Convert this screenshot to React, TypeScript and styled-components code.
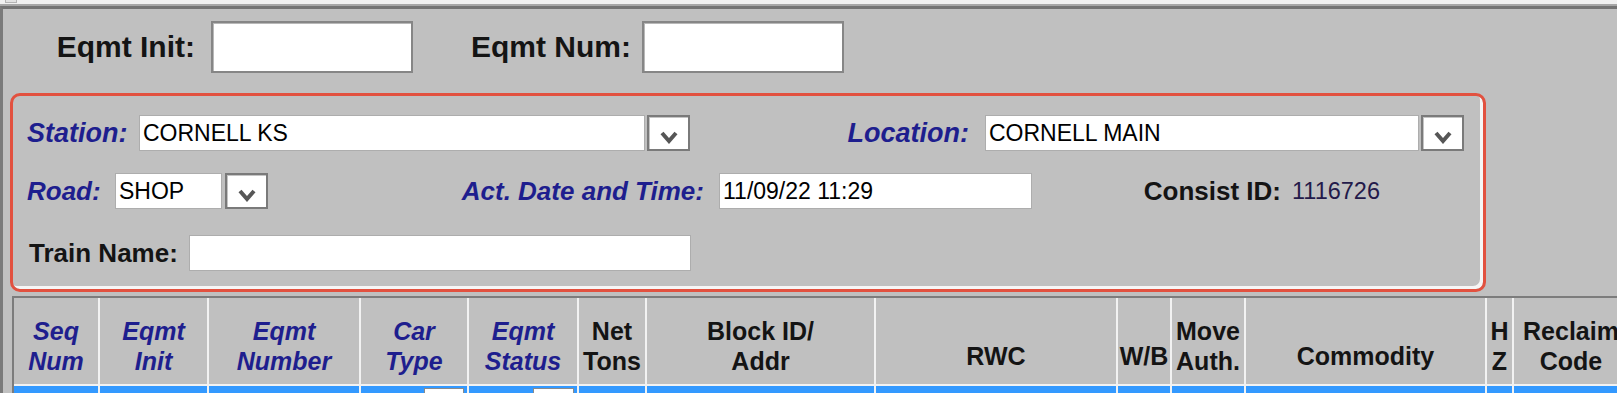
import React from 'react';
import styled, { createGlobalStyle } from 'styled-components';

const GlobalStyle = createGlobalStyle`
    html, body {
        margin: 0;
        padding: 0;
        overflow: hidden;
        background: #c0c0c0;
    }
    body {
        font-family: "Liberation Sans", Arial, sans-serif;
    }
    * {
        box-sizing: border-box;
    }
`

const TopStrip = styled.div`
    height: 6px;
    background: #f0f0f0;
    border-bottom: 2px solid #a6a6a6;
    display: flex;
`

const Grip = styled.div`
    margin-left: 5px;
    width: 12px;
    height: 3px;
    background: #e2e2e2;
    border: 1px solid #b4b4b4;
    border-top: none;
`

const Frame = styled.div`
    border-top: 3px solid #737373;
    border-left: 3px solid #7a7a7a;
    min-height: 420px;
`

const SearchBar = styled.div`
    height: 84px;
    padding-top: 12px;
    display: flex;
    align-items: flex-start;
`

const LabelCell = styled.div<{ $width: number; $align?: 'left' | 'right'; $pad: number; $size?: number; $blue?: boolean; $height?: number }>`
    width: ${p => p.$width}px;
    flex: none;
    text-align: ${p => p.$align || 'right'};
    ${p => (p.$align === 'left' ? `padding-left: ${p.$pad}px;` : `padding-right: ${p.$pad}px;`)}
    font-size: ${p => p.$size || 26}px;
    line-height: ${p => p.$height || 36}px;
    font-weight: bold;
    font-style: ${p => (p.$blue ? 'italic' : 'normal')};
    color: ${p => (p.$blue ? '#1e1e8e' : '#141414')};
    white-space: nowrap;
`

const SearchInput = styled.input`
    width: 202px;
    height: 52px;
    flex: none;
    background: #fff;
    border: 2px solid #868686;
    box-shadow: inset 1px 1px 0 #b8b8b8;
    outline: none;
    padding: 0 4px;
    font-family: "Liberation Sans", Arial, sans-serif;
    font-size: 23px;
`

const Panel = styled.div`
    margin-left: 7px;
    width: 1476px;
    border: 3px solid #e2513f;
    border-radius: 10px;
    box-shadow: inset -3px -3px 0 #f6f6f6;
    padding: 19px 0 18px 0;
    display: flex;
    flex-direction: column;
`

const PanelRow = styled.div<{ $top?: number }>`
    display: flex;
    align-items: center;
    height: 36px;
    margin-top: ${p => p.$top || 0}px;
`

const TextBox = styled.input<{ $width: number }>`
    width: ${p => p.$width}px;
    height: 36px;
    flex: none;
    background: #fff;
    border: 1px solid #adadad;
    outline: none;
    padding: 0 3px;
    font-family: "Liberation Sans", Arial, sans-serif;
    font-size: 23px;
    color: #000;
`

const Select = styled.div<{ $gap: number }>`
    display: flex;
    gap: ${p => p.$gap}px;
    flex: none;
`

const DropButton = styled.div`
    width: 43px;
    height: 36px;
    background: #fff;
    border: 2px solid #7a7a7a;
    box-shadow: inset 1px 1px 0 #c4c4c4;
    display: flex;
    align-items: flex-end;
    justify-content: center;
    padding-bottom: 5px;
`

const ConsistValue = styled.span`
    font-size: 23.5px;
    line-height: 36px;
    color: #231a4a;
`

const Grid = styled.div`
    margin-top: 4px;
    margin-left: 9px;
    width: max-content;
    display: grid;
    grid-template-columns: 84px 107px 150px 106px 108px 66px 227px 240px 52px 72px 239px 25px 114px;
    grid-template-rows: 86px 40px;
    gap: 2px;
    background: #f2f2f2;
    border-top: 2px solid #7c7c7c;
    border-left: 2px solid #7c7c7c;
`

const HeadCell = styled.div<{ $blue?: boolean; $single?: boolean }>`
    background: #c0c0c0;
    display: flex;
    flex-direction: column;
    justify-content: flex-end;
    align-items: center;
    text-align: center;
    padding-bottom: ${p => (p.$single ? 13 : 8)}px;
    font-size: 25px;
    line-height: 30px;
    font-weight: bold;
    font-style: ${p => (p.$blue ? 'italic' : 'normal')};
    color: ${p => (p.$blue ? '#1e1e8e' : '#141414')};
    white-space: nowrap;
    overflow: hidden;
`

const BodyCell = styled.div`
    background: #3399ff;
    display: flex;
    justify-content: flex-end;
    padding-right: 3px;
`

const MiniSelect = styled.div<{ $width: number }>`
    width: ${p => p.$width}px;
    height: 36px;
    margin-top: 2px;
    background: #fff;
    border: 1px solid #8a8a8a;
`

function Chevron() {
    return (
        <svg width="18" height="13" viewBox="0 0 18 13">
            <polyline points="2,2 9,10 16,2" fill="none" stroke="#565656" strokeWidth="4" />
        </svg>
    )
}

type Head = { text: string[]; blue?: boolean }

const heads: Head[] = [
    { text: ['Seq', 'Num'], blue: true },
    { text: ['Eqmt', 'Init'], blue: true },
    { text: ['Eqmt', 'Number'], blue: true },
    { text: ['Car', 'Type'], blue: true },
    { text: ['Eqmt', 'Status'], blue: true },
    { text: ['Net', 'Tons'] },
    { text: ['Block ID/', 'Addr'] },
    { text: ['RWC'] },
    { text: ['W/B'] },
    { text: ['Move', 'Auth.'] },
    { text: ['Commodity'] },
    { text: ['H', 'Z'] },
    { text: ['Reclaim', 'Code'] },
]

export default function App() {
    return (
        <>
            <GlobalStyle />
            <TopStrip>
                <Grip />
            </TopStrip>
            <Frame>
                <SearchBar>
                    <LabelCell $width={208} $pad={16} $size={30} $height={52}>Eqmt Init:</LabelCell>
                    <SearchInput readOnly />
                    <LabelCell $width={229} $pad={11} $size={30} $height={52}>Eqmt Num:</LabelCell>
                    <SearchInput readOnly />
                </SearchBar>

                <Panel>
                    <PanelRow>
                        <LabelCell $width={126} $align="left" $pad={14} $size={27} $blue>Station:</LabelCell>
                        <Select $gap={2}>
                            <TextBox $width={506} readOnly value="CORNELL KS" />
                            <DropButton><Chevron /></DropButton>
                        </Select>
                        <LabelCell $width={295} $pad={16} $size={27} $blue>Location:</LabelCell>
                        <Select $gap={2}>
                            <TextBox $width={434} readOnly value="CORNELL MAIN" />
                            <DropButton><Chevron /></DropButton>
                        </Select>
                    </PanelRow>

                    <PanelRow $top={22}>
                        <LabelCell $width={102} $align="left" $pad={14} $blue>Road:</LabelCell>
                        <Select $gap={3}>
                            <TextBox $width={107} readOnly value="SHOP" />
                            <DropButton><Chevron /></DropButton>
                        </Select>
                        <LabelCell $width={451} $pad={15} $blue>Act. Date and Time:</LabelCell>
                        <TextBox $width={313} readOnly value="11/09/22 11:29" />
                        <LabelCell $width={260} $pad={11}>Consist ID:</LabelCell>
                        <ConsistValue>1116726</ConsistValue>
                    </PanelRow>

                    <PanelRow $top={26}>
                        <LabelCell $width={176} $align="left" $pad={16}>Train Name:</LabelCell>
                        <TextBox $width={502} readOnly value="" />
                    </PanelRow>
                </Panel>

                <Grid>
                    {heads.map((h, i) => (
                        <HeadCell key={i} $blue={h.blue} $single={h.text.length === 1}>
                            {h.text.map((line, j) => (
                                <span key={j}>{line}</span>
                            ))}
                        </HeadCell>
                    ))}
                    {heads.map((_, i) => (
                        <BodyCell key={i}>
                            {i === 3 && <MiniSelect $width={40} />}
                            {i === 4 && <MiniSelect $width={41} />}
                        </BodyCell>
                    ))}
                </Grid>
            </Frame>
        </>
    )
}
